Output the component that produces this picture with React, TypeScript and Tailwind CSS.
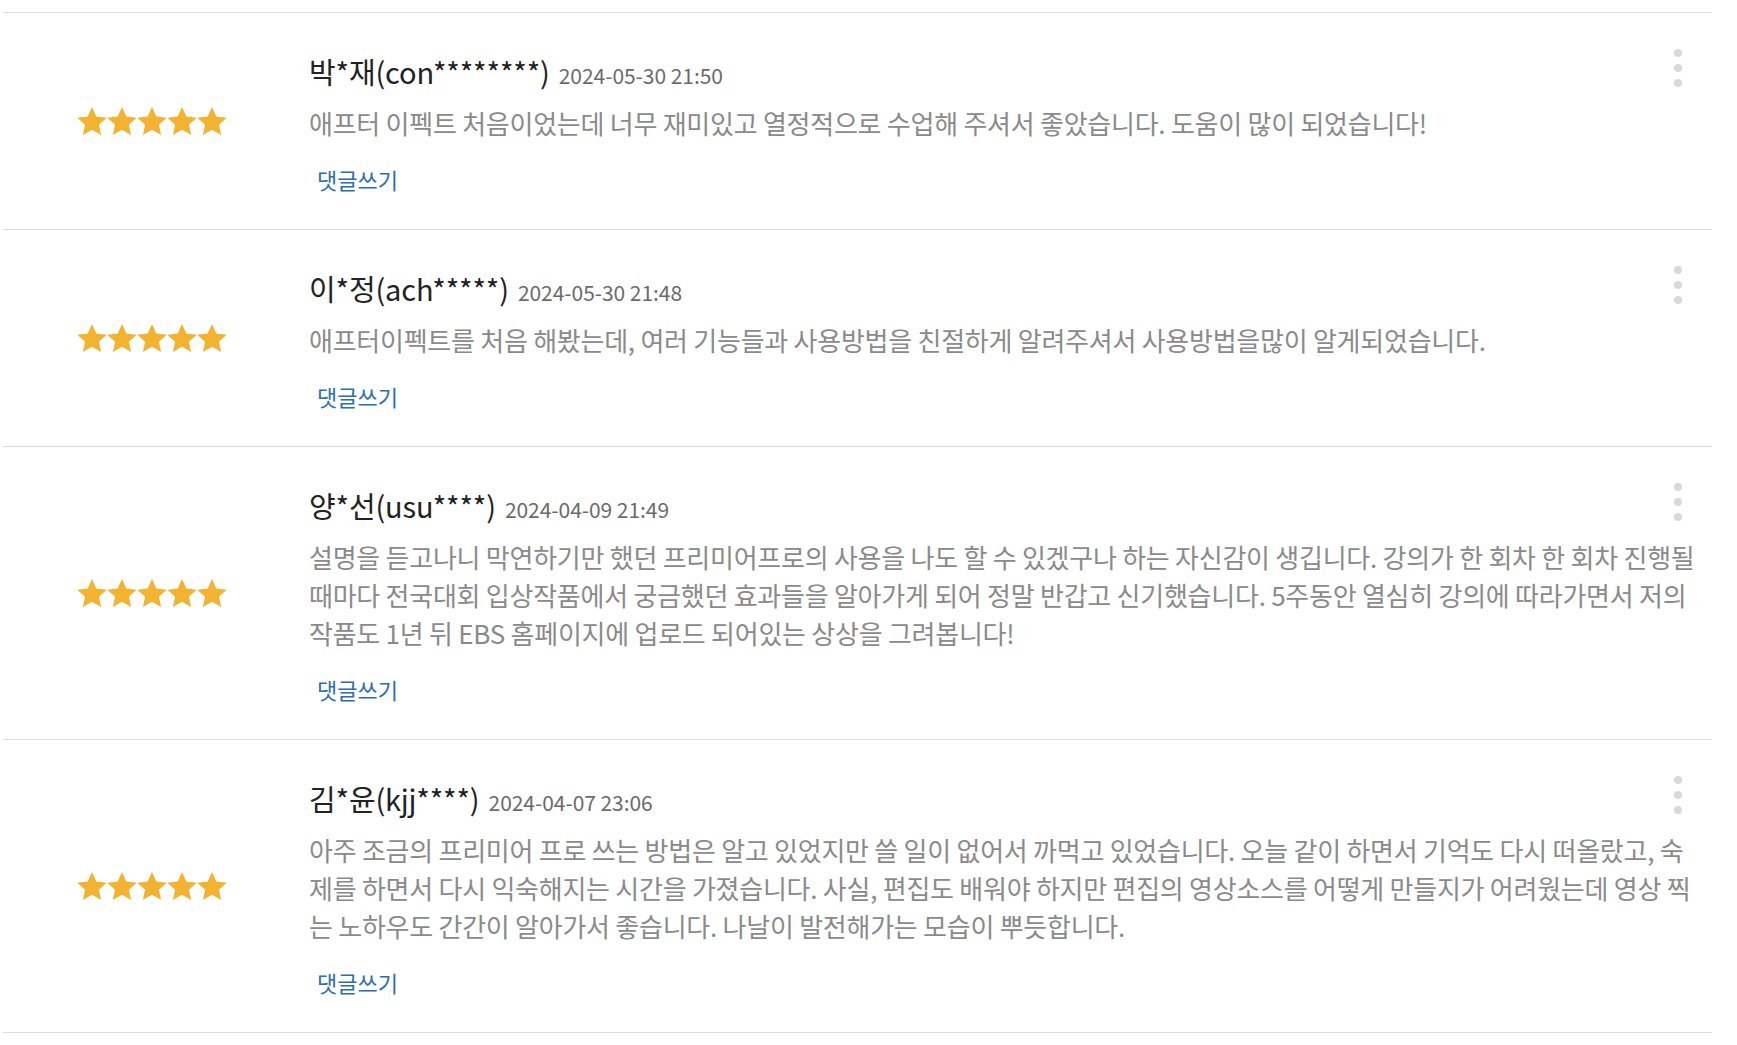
import React from "react";

type Review = {
  name: string;
  date: string;
  lines: string[];
};

const reviews: Review[] = [
  {
    name: "박*재(con********)",
    date: "2024-05-30 21:50",
    lines: [
      "애프터 이펙트 처음이었는데 너무 재미있고 열정적으로 수업해 주셔서 좋았습니다. 도움이 많이 되었습니다!",
    ],
  },
  {
    name: "이*정(ach*****)",
    date: "2024-05-30 21:48",
    lines: [
      "애프터이펙트를 처음 해봤는데, 여러 기능들과 사용방법을 친절하게 알려주셔서 사용방법을많이 알게되었습니다.",
    ],
  },
  {
    name: "양*선(usu****)",
    date: "2024-04-09 21:49",
    lines: [
      "설명을 듣고나니 막연하기만 했던 프리미어프로의 사용을 나도 할 수 있겠구나 하는 자신감이 생깁니다. 강의가 한 회차 한 회차 진행될",
      "때마다 전국대회 입상작품에서 궁금했던 효과들을 알아가게 되어 정말 반갑고 신기했습니다. 5주동안 열심히 강의에 따라가면서 저의",
      "작품도 1년 뒤 EBS 홈페이지에 업로드 되어있는 상상을 그려봅니다!",
    ],
  },
  {
    name: "김*윤(kjj****)",
    date: "2024-04-07 23:06",
    lines: [
      "아주 조금의 프리미어 프로 쓰는 방법은 알고 있었지만 쓸 일이 없어서 까먹고 있었습니다. 오늘 같이 하면서 기억도 다시 떠올랐고, 숙",
      "제를 하면서 다시 익숙해지는 시간을 가졌습니다. 사실, 편집도 배워야 하지만 편집의 영상소스를 어떻게 만들지가 어려웠는데 영상 찍",
      "는 노하우도 간간이 알아가서 좋습니다. 나날이 발전해가는 모습이 뿌듯합니다.",
    ],
  },
];

function Star() {
  return (
    <svg width="30" height="29" viewBox="0 0 30 29" className="block">
      <polygon
        points="15,0 19.29,9.59 29.74,10.71 21.94,17.76 24.11,28.04 15,22.8 5.89,28.04 8.06,17.76 0.26,10.71 10.71,9.59"
        fill="#f3b22f"
      />
    </svg>
  );
}

function Stars() {
  return (
    <div className="flex">
      {[0, 1, 2, 3, 4].map((i) => (
        <Star key={i} />
      ))}
    </div>
  );
}

export default function App() {
  return (
    <div className="w-[1737px] min-h-[1045px] bg-white pt-[12px] font-['Noto_Sans_CJK_KR','Noto_Sans',sans-serif]">
      <ul className="ml-[3px] w-[1709px] border-t border-[#dddddd]">
        {reviews.map((r, idx) => (
          <li key={idx} className="relative flex border-b border-[#dddddd]">
            <div className="w-[306px] shrink-0 flex items-center pl-[74px]">
              <Stars />
            </div>
            <div className="flex-1 pt-[38px] pb-[35px]">
              <div className="flex items-baseline h-[40px] leading-[40px]">
                <span className="text-[29px] text-[#222222] tracking-[-0.15px]">{r.name}</span>
                <span className="ml-[9px] text-[21px] text-[#6b6b6b] tracking-[-0.05px]">{r.date}</span>
              </div>
              <div className="mt-[13px] text-[26px] leading-[38px] text-[#8a8a8a] tracking-[-0.25px]">
                {r.lines.map((l, i) => (
                  <span key={i} className="block whitespace-nowrap">
                    {l}
                  </span>
                ))}
              </div>
              <div className="mt-[22px] h-[30px] leading-[30px]">
                <button className="ml-[8px] text-[22px] text-[#2d6db3]">댓글쓰기</button>
              </div>
            </div>
            <div className="absolute right-[30px] top-[36px] flex flex-col gap-[7px]">
              <span className="block w-[8px] h-[8px] rounded-full bg-[#d9d9d9]" />
              <span className="block w-[8px] h-[8px] rounded-full bg-[#d9d9d9]" />
              <span className="block w-[8px] h-[8px] rounded-full bg-[#d9d9d9]" />
            </div>
          </li>
        ))}
      </ul>
    </div>
  );
}
